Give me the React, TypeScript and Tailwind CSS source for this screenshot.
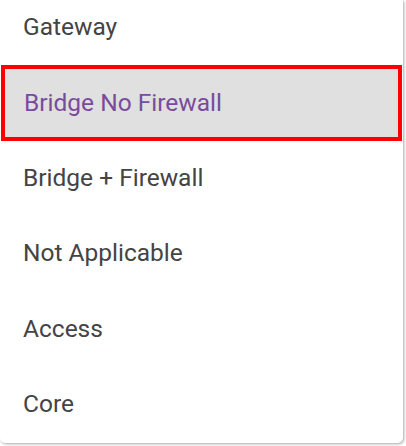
const options = [
  "Gateway",
  "Bridge No Firewall",
  "Bridge + Firewall",
  "Not Applicable",
  "Access",
  "Core",
];

const selected = "Bridge No Firewall";

export default function App() {
  return (
    <div className="w-[406px] h-[446px] bg-white overflow-hidden" style={{ fontFamily: "Roboto, 'Liberation Sans', sans-serif" }}>
      <div className="w-[403px] h-[443px] bg-white rounded-b-[5px] shadow-[1px_1px_3px_rgba(0,0,0,0.35)] overflow-hidden">
        <ul className="-mt-[10px]">
          {options.map((opt) => {
            const isSel = opt === selected;
            return (
              <li
                key={opt}
                className={`h-[75.4px] flex items-center px-[23px] text-[24.5px] ${
                  isSel
                    ? "bg-[#e0e0e0] text-[#7a4b9c] border-[4px] border-[#ff0000] ml-[1px] mr-[1px] pl-[19px]"
                    : "text-[#444444]"
                }`}
              >
                {opt}
              </li>
            );
          })}
        </ul>
      </div>
    </div>
  );
}
